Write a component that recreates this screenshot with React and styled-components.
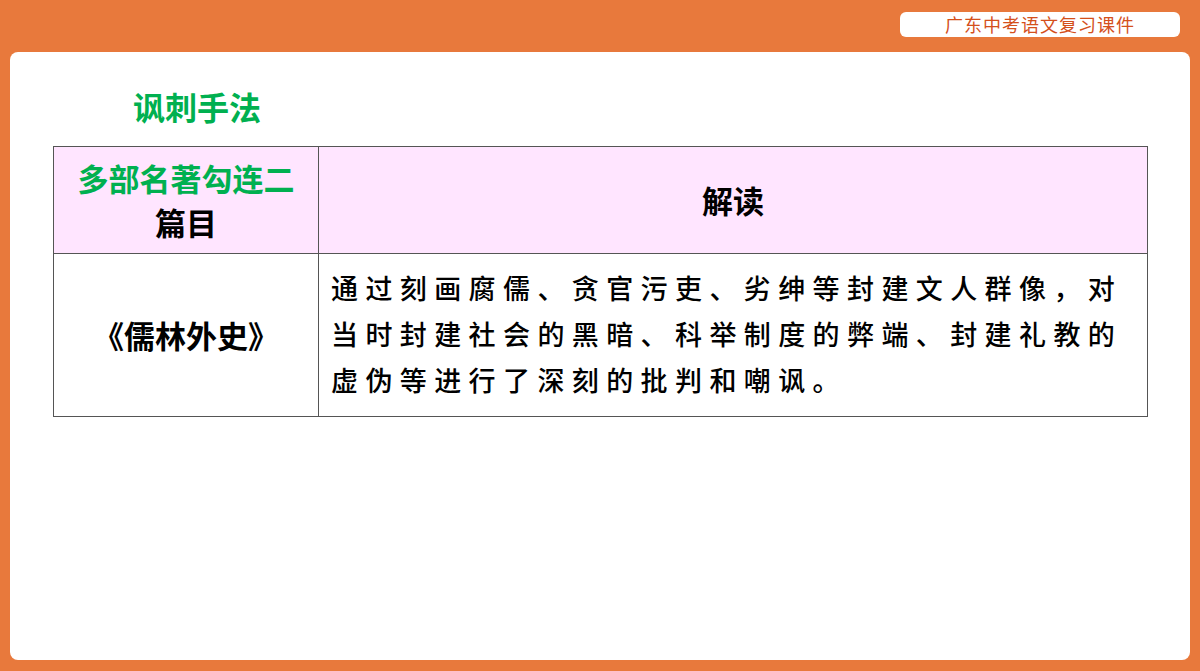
import React from "react";
import styled, { createGlobalStyle } from "styled-components";

const G = createGlobalStyle`
  html,body{margin:0;padding:0;}
  body{background:#E8793C;font-family:"Noto Sans CJK SC",sans-serif;}
`;
const Page = styled.div`width:1200px;height:671px;background:#E8793C;display:flex;flex-direction:column;box-sizing:border-box;padding:12px 10px 11px;`;
const Top = styled.div`height:40px;display:flex;justify-content:flex-end;align-items:flex-start;padding-right:10px;`;
const Badge = styled.div`width:280px;height:25px;background:#fff;border-radius:6px;color:#D4501C;font-size:18px;line-height:25px;text-align:center;letter-spacing:1px;`;
const Panel = styled.div`flex:1;background:#fff;border-radius:8px;padding:32px 43px 0 43px;`;
const Title = styled.div`color:#00B050;font-size:32px;font-weight:700;line-height:44px;margin-left:80px;margin-bottom:18px;`;
const Table = styled.table`width:1095px;border-collapse:collapse;`;
const Th = styled.td`background:#FFE5FF;border:1.5px solid #555;height:106px;padding:0;text-align:center;font-weight:700;font-size:31px;line-height:44px;color:#000;width:${p=>p.w||"auto"};`;
const Green = styled.div`color:#00B050;`;
const Td = styled.td`border:1.5px solid #555;height:156px;text-align:${p=>p.left?"left":"center"};font-weight:${p=>p.left?500:700};font-size:${p=>p.left?"27px":"31px"};line-height:46px;letter-spacing:${p=>p.left?"7.4px":"0"};padding:${p=>p.left?"2px 0 4px 12px":"0"};`;

export default function App(){
  return <Page><G/>
    <Top><Badge>广东中考语文复习课件</Badge></Top>
    <Panel>
      <Title>讽刺手法</Title>
      <Table><tbody>
        <tr><Th w="264px"><Green>多部名著勾连二</Green><div>篇目</div></Th><Th>解读</Th></tr>
        <tr><Td>《儒林外史》</Td><Td left>通过刻画腐儒、贪官污吏、劣绅等封建文人群像，对当时封建社会的黑暗、科举制度的弊端、封建礼教的虚伪等进行了深刻的批判和嘲讽。</Td></tr>
      </tbody></Table>
    </Panel>
  </Page>;
}
